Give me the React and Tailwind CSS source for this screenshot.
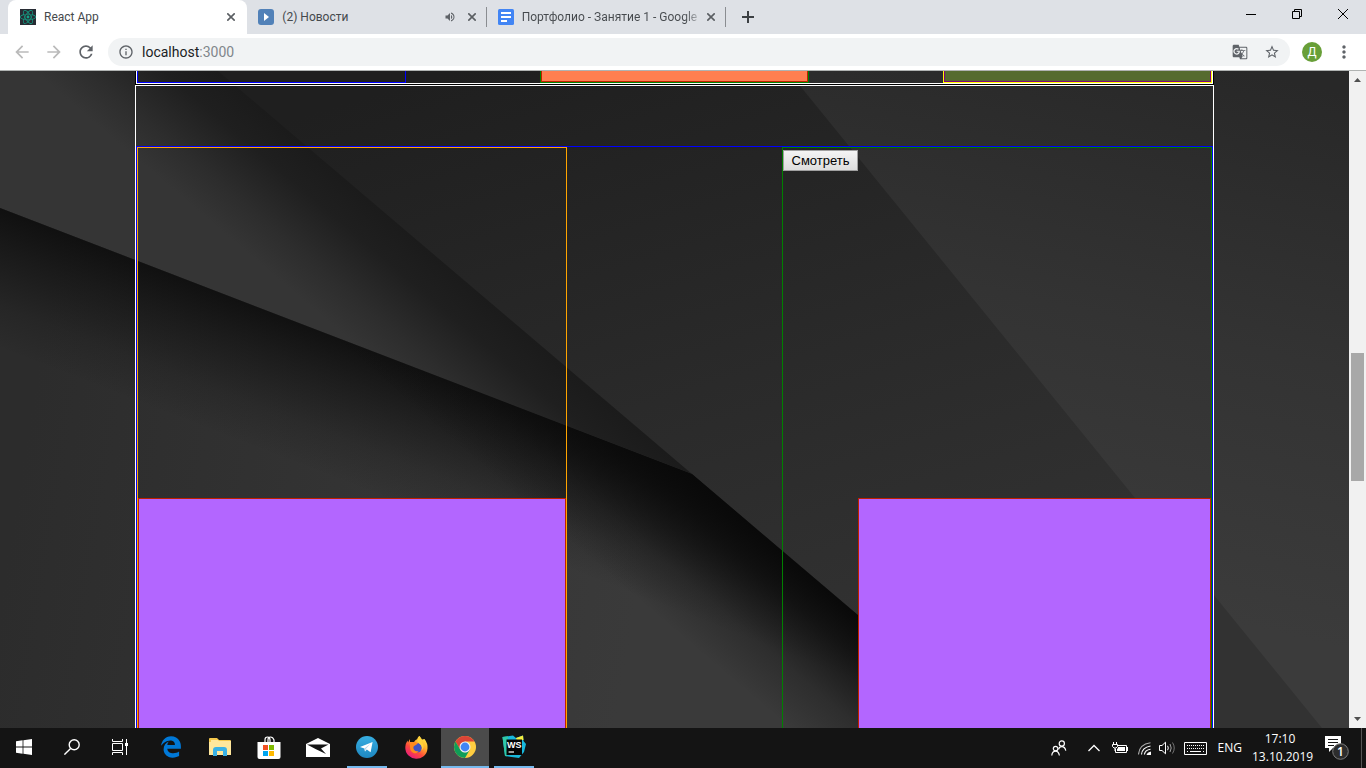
import React from "react";
import { FaEdgeLegacy, FaReact } from "react-icons/fa";
import {
  MdArrowBack,
  MdArrowForward,
  MdGTranslate,
  MdInfoOutline,
  MdMoreVert,
  MdRefresh,
  MdStarBorder,
  MdVolumeUp,
} from "react-icons/md";

function Backdrop() {
  return (
    <svg
      aria-hidden="true"
      className="absolute inset-0 h-full w-full"
      viewBox="0 71 1349 657"
      preserveAspectRatio="none"
    >
      <defs>
        <linearGradient id="mid" gradientUnits="userSpaceOnUse" x1="450" y1="71" x2="650" y2="728">
          <stop offset="0" stopColor="#1f1f1f" />
          <stop offset="0.55" stopColor="#2a2a2a" />
          <stop offset="1" stopColor="#323232" />
        </linearGradient>
        <linearGradient id="right" gradientUnits="userSpaceOnUse" x1="1250" y1="71" x2="1130" y2="600">
          <stop offset="0" stopColor="#282828" />
          <stop offset="0.5" stopColor="#333333" />
          <stop offset="1" stopColor="#3b3b3b" />
        </linearGradient>
        <linearGradient id="strip" gradientUnits="userSpaceOnUse" x1="566" y1="367" x2="475" y2="474">
          <stop offset="0" stopColor="#1b1b1b" />
          <stop offset="0.25" stopColor="#1f1f1f" />
          <stop offset="0.6" stopColor="#2d2d2d" />
          <stop offset="0.85" stopColor="#353535" />
          <stop offset="1" stopColor="#353535" />
        </linearGradient>
        <linearGradient id="low" gradientUnits="userSpaceOnUse" x1="0" y1="600" x2="620" y2="700">
          <stop offset="0" stopColor="#2c2c2c" />
          <stop offset="1" stopColor="#3a3a3a" />
        </linearGradient>
        <linearGradient id="shadeB" gradientUnits="userSpaceOnUse" x1="300" y1="323" x2="252" y2="447">
          <stop offset="0" stopColor="#0b0b0b" stopOpacity="0.85" />
          <stop offset="0.3" stopColor="#0b0b0b" stopOpacity="0.55" />
          <stop offset="0.7" stopColor="#0b0b0b" stopOpacity="0.18" />
          <stop offset="1" stopColor="#0b0b0b" stopOpacity="0" />
        </linearGradient>
        <linearGradient id="shadeA" gradientUnits="userSpaceOnUse" x1="775" y1="544" x2="690" y2="644">
          <stop offset="0" stopColor="#090909" stopOpacity="1" />
          <stop offset="0.25" stopColor="#090909" stopOpacity="0.75" />
          <stop offset="0.65" stopColor="#090909" stopOpacity="0.25" />
          <stop offset="1" stopColor="#090909" stopOpacity="0" />
        </linearGradient>
      </defs>
      <rect x="0" y="71" width="1349" height="657" fill="url(#mid)" />
      <path d="M788 71H1349V728H1322Z" fill="url(#right)" />
      <path d="M0 71H218L692 474L0 208Z" fill="url(#strip)" />
      <path d="M0 208L692 474L991 728H0Z" fill="url(#low)" />
      <path d="M0 208L692 474L991 728H0Z" fill="url(#shadeB)" />
      <path d="M0 208L692 474L991 728H0Z" fill="url(#shadeA)" />
    </svg>
  );
}

function Tab({ active, icon, title, sound, divider }) {
  return (
    <div
      className={
        active
          ? "flex h-full w-1/3 items-center rounded-t-lg bg-white pr-2 pl-3"
          : "flex h-full w-1/3 items-center pl-[11px]"
      }
    >
      {icon}
      <span
        className={
          divider && !sound
            ? "ml-2 min-w-0 flex-1 bg-linear-to-r from-[#45494d] from-90% to-transparent bg-clip-text text-xs whitespace-nowrap text-transparent"
            : "ml-2 min-w-0 flex-1 truncate text-xs text-[#45494d]"
        }
      >
        {title}
      </span>
      {sound && <MdVolumeUp className="mr-2 size-3 text-[#5f6368]" />}
      <button aria-label={"Закрыть " + title} className="flex size-4 items-center justify-center">
        <svg className="size-2" viewBox="0 0 8 8" stroke="#5a5e62" strokeWidth="1.6">
          <path d="M0.3 0.3L7.7 7.7M7.7 0.3L0.3 7.7" />
        </svg>
      </button>
      {divider && <span className="ml-1.5 h-5 w-px bg-[#8a8d91]" />}
    </div>
  );
}

function TabStrip() {
  return (
    <div className="flex h-[34px] bg-[#dee1e6]">
      <div className="flex w-[726px] min-w-0 pl-2">
        <Tab
          active
          title="React App"
          icon={
            <span className="flex size-4 shrink-0 items-center justify-center bg-[#282c34]">
              <FaReact className="size-4 text-[#12a588]" />
            </span>
          }
        />
        <Tab
          title="(2) Новости"
          sound
          divider
          icon={
            <svg className="size-4 shrink-0" viewBox="0 0 16 16">
              <rect width="16" height="16" rx="3" fill="#5181b8" />
              <path d="M6 4L11 8L6 12Z" fill="#fff" />
            </svg>
          }
        />
        <Tab
          title="Портфолио - Занятие 1 - Google"
          divider
          icon={
            <svg className="size-4 shrink-0" viewBox="0 0 16 16">
              <rect width="16" height="16" rx="1.5" fill="#4285f4" />
              <path d="M3 4H13M3 8H13M3 12H9" stroke="#fff" strokeWidth="2" />
            </svg>
          }
        />
      </div>
      <button aria-label="Новая вкладка" className="ml-3 flex w-5 items-center justify-center">
        <svg className="size-3" viewBox="0 0 12 12" stroke="#3c4043" strokeWidth="2">
          <path d="M6 0V12M0 6H12" />
        </svg>
      </button>
      <div className="ml-auto flex h-7">
        <button aria-label="Свернуть" className="flex w-[46px] items-center justify-center">
          <svg className="size-2.5" viewBox="0 0 10 10">
            <path d="M0 5.5H10" stroke="#000" />
          </svg>
        </button>
        <button aria-label="Развернуть" className="flex w-[46px] items-center justify-center">
          <svg className="size-2.5" viewBox="0 0 10 10" fill="none" stroke="#000">
            <path d="M0.5 2.5H7.5V9.5H0.5ZM2.5 2.5V0.5H9.5V7.5H7.5" />
          </svg>
        </button>
        <button aria-label="Закрыть" className="flex w-[46px] items-center justify-center">
          <svg className="size-2.5" viewBox="0 0 10 10" stroke="#000">
            <path d="M0 0L10 10M10 0L0 10" />
          </svg>
        </button>
      </div>
    </div>
  );
}

function Toolbar() {
  return (
    <div className="flex h-[37px] items-center border-b border-[#b0b3b2] bg-white px-3 py-1">
      <button aria-label="Назад" className="flex w-5 justify-center text-[#bababa]">
        <MdArrowBack className="size-5" />
      </button>
      <button aria-label="Вперёд" className="ml-3 flex w-5 justify-center text-[#bababa]">
        <MdArrowForward className="size-5" />
      </button>
      <button aria-label="Обновить" className="ml-3 flex w-5 justify-center text-[#5f6368]">
        <MdRefresh className="size-5" />
      </button>
      <div className="ml-3 flex h-7 flex-1 items-center rounded-full bg-[#f1f3f4] px-2.5">
        <MdInfoOutline className="size-4 text-[#5f6368]" />
        <a href="#top" className="ml-2 flex-1 text-sm text-[#202124]">
          localhost<span className="text-[#80868b]">:3000</span>
        </a>
        <button aria-label="Перевести страницу" className="mr-4 text-[#5f6368]">
          <MdGTranslate className="size-4" />
        </button>
        <button aria-label="Добавить в закладки" className="text-[#5f6368]">
          <MdStarBorder className="size-4" />
        </button>
      </div>
      <button
        aria-label="Профиль"
        className="ml-3 flex size-5 items-center justify-center rounded-full bg-[#689f38] text-xs text-white"
      >
        Д
      </button>
      <button aria-label="Меню" className="ml-3 flex w-5 justify-center text-[#5f6368]">
        <MdMoreVert className="size-5" />
      </button>
    </div>
  );
}

function Page() {
  return (
    <main className="relative min-w-0 flex-1 overflow-hidden bg-[#2a2a2a]">
      <Backdrop />
      <div className="relative mx-auto flex h-full w-4/5 flex-col">
        <div className="h-3.5 shrink-0 border-x border-b border-black">
          <div className="flex h-full justify-between border-x border-b border-white">
            <div className="w-1/4 border-x border-b border-[#0000ff]" />
            <div className="w-1/4 border-x border-b border-[#008000]">
              <div className="h-full border-x border-b border-[#c02000] bg-[#ff7f50]" />
            </div>
            <div className="w-1/4 border-x border-b border-[#ffff00]">
              <div className="h-full border-x border-b border-[#800080] bg-[#556b2f]" />
            </div>
          </div>
        </div>
        <div className="flex flex-1 flex-col border-x border-t border-white pt-[60px]">
          <div className="flex flex-1 justify-between border-x border-t border-[#0000ff]">
            <div className="flex w-2/5 border-x border-t border-[#ffa500] pt-[350px]">
              <div className="flex-1 border-x border-t border-[#c02000] bg-[#b366ff]" />
            </div>
            <div className="flex w-2/5 items-start border-x border-t border-[#008000]">
              <button className="mt-0.5 h-[21px] w-[75px] border border-[#a0a0a0] bg-linear-to-b from-[#f4f4f4] to-[#dddddd] text-center font-['Liberation_Sans',sans-serif] text-[13px] leading-4 text-black">
                Смотреть
              </button>
              <div className="flex flex-1 self-stretch pt-[350px]">
                <div className="flex-1 border-x border-t border-[#c02000] bg-[#b366ff]" />
              </div>
            </div>
          </div>
        </div>
      </div>
    </main>
  );
}

function Scrollbar() {
  return (
    <div className="flex w-[17px] flex-col items-center bg-[#f1f1f1]">
      <svg className="h-[17px] w-[17px]" viewBox="0 0 17 17">
        <path d="M5 11L8.5 7L12 11Z" fill="#505050" />
      </svg>
      <div className="flex w-full flex-1 flex-col items-center">
        <div className="grow-265" />
        <div className="h-32 w-[13px] bg-[#a8a8a8]" />
        <div className="grow-230" />
      </div>
      <svg className="h-[17px] w-[17px]" viewBox="0 0 17 17">
        <path d="M5 6L8.5 10L12 6Z" fill="#505050" />
      </svg>
    </div>
  );
}

function TaskButton({ label, active, running, children }) {
  return (
    <button
      aria-label={label}
      className={
        active
          ? "flex h-full w-12 flex-col items-center bg-[#4b4b4b]"
          : "flex h-full w-12 flex-col items-center"
      }
    >
      <span className="flex flex-1 items-center justify-center">{children}</span>
      {running && <span className={active ? "h-0.5 w-12 bg-[#76b9ed]" : "h-0.5 w-10 bg-[#76b9ed]"} />}
      {!running && <span className="h-0.5" />}
    </button>
  );
}

function StartIcon() {
  return (
    <svg className="size-4" viewBox="0 0 16 16" fill="#fff">
      <path d="M0 2.2L6.6 1.3V7.6H0ZM7.4 1.2L16 0V7.6H7.4ZM0 8.4H6.6V14.7L0 13.8ZM7.4 8.4H16V16L7.4 14.8Z" />
    </svg>
  );
}

function SearchIcon() {
  return (
    <svg className="size-4" viewBox="0 0 16 16" fill="none" stroke="#fff" strokeWidth="1.4">
      <circle cx="10.2" cy="5.8" r="5" />
      <path d="M6.6 9.4L0.4 15.6" />
    </svg>
  );
}

function TaskViewIcon() {
  return (
    <svg className="size-4" viewBox="0 0 16 16" fill="none" stroke="#fff">
      <path d="M0.5 0V2.5H10.5V0M0.5 16V13.5H10.5V16M0.5 4.5H10.5V11.5H0.5ZM14.5 0V16" />
      <path d="M13 4H16V7H13Z" fill="#fff" stroke="none" />
    </svg>
  );
}

function FolderIcon() {
  return (
    <svg className="h-[18px] w-[22px]" viewBox="0 0 22 18">
      <path d="M0 1Q0 0 1 0H8L10 2H21Q22 2 22 3V17H0Z" fill="#f5c84c" />
      <path d="M2 2H9L10 3H22V17H0V4H2Z" fill="#ffe79c" />
      <path d="M4 18V12Q4 9 7 9H15Q18 9 18 12V18H14V13H8V18Z" fill="#39b1e6" />
    </svg>
  );
}

function StoreIcon() {
  return (
    <svg className="h-[23px] w-6" viewBox="0 0 24 23">
      <path d="M8 7V4Q8 1 10.5 1T13 4V7M11 6V4Q11 1 13.5 1T17 4V7" fill="none" stroke="#fff" strokeWidth="1.2" />
      <path d="M0.5 6H23.5V21Q23.5 23 21.5 23H2.5Q0.5 23 0.5 21Z" fill="#fff" />
      <path d="M6 9H11V14H6Z" fill="#f25022" />
      <path d="M12 9H17V14H12Z" fill="#7fba00" />
      <path d="M6 15H11V20H6Z" fill="#00a4ef" />
      <path d="M12 15H17V20H12Z" fill="#ffb900" />
    </svg>
  );
}

function MailIcon() {
  return (
    <svg className="h-[19px] w-6" viewBox="0 0 24 19">
      <path d="M0 6L12 0L24 6V19H0Z" fill="#fff" />
      <path d="M1 6.5H22.5L15 10.5L20 16L10 11.2Z" fill="#151515" />
    </svg>
  );
}

function TelegramIcon() {
  return (
    <svg className="size-[22px]" viewBox="0 0 22 22">
      <defs>
        <linearGradient id="tg" x1="0" y1="0" x2="0" y2="1">
          <stop offset="0" stopColor="#37aee2" />
          <stop offset="1" stopColor="#1e87c0" />
        </linearGradient>
      </defs>
      <circle cx="11" cy="11" r="11" fill="url(#tg)" />
      <path d="M4 11L16.6 6L14.6 16.2L10.8 13.6L9 15.4L8.4 12.6Z" fill="#fff" />
      <path d="M8.4 12.6L14.4 7.8L9.8 13L9 15.4Z" fill="#b6d5ea" />
    </svg>
  );
}

function FirefoxIcon() {
  return (
    <svg className="size-[23px]" viewBox="0 0 23 23">
      <defs>
        <linearGradient id="fx" x1="0.9" y1="0" x2="0.2" y2="1">
          <stop offset="0" stopColor="#fff44f" />
          <stop offset="0.35" stopColor="#ffb52b" />
          <stop offset="0.65" stopColor="#ff4b3a" />
          <stop offset="1" stopColor="#e31587" />
        </linearGradient>
      </defs>
      <path
        d="M14.5 0Q16 1.5 17 3.5L19.5 3Q23 7.5 22.5 12.5Q22 18 18.3 20.6Q15 23 11 22.8Q6.5 22.6 3.5 19.6Q0 16 0.3 11Q0.5 7.5 2.5 4.5L3 6.5L5 3V6H9Q10.5 3.5 12.5 3Q12.5 1 14.5 0Z"
        fill="url(#fx)"
      />
      <circle cx="12" cy="11.8" r="4.8" fill="#3f55c4" />
      <path d="M5 7Q9 5 13 7.4L10 9.5Q7.8 10 8.6 13Q10 16 13.6 15Q12 18.3 8.5 17Q5 15.5 5 11Z" fill="#ff8a1c" />
      <path d="M12.5 3Q12 6 15 8Q18 11 16.4 14.5Q19.5 12 18 8Q17 5 14.5 0Q12.6 1 12.5 3Z" fill="#ffd23c" />
    </svg>
  );
}

function ChromeIcon() {
  return (
    <svg className="size-[22px]" viewBox="0 0 22 22">
      <circle cx="11" cy="11" r="11" fill="#ffcd40" />
      <path d="M1.5 5.5A11 11 0 0 1 20.5 5.5H11L6.2 13.7Z" fill="#db4437" />
      <path d="M1.5 5.5L6.3 13.7L11 16.5L15.8 13.7L11 22A11 11 0 0 1 1.5 5.5Z" fill="#0f9d58" />
      <circle cx="11" cy="11" r="5.5" fill="#f1f1f1" />
      <circle cx="11" cy="11" r="4.4" fill="#4285f4" />
    </svg>
  );
}

function WebStormIcon() {
  return (
    <svg className="size-6" viewBox="0 0 24 24">
      <path d="M0.5 2L11 0.5L14 3L21 0.5L21.5 6L24 9L22 17L17 23L3 21Z" fill="#18b8dc" />
      <path d="M14 3L21 0.5L21.5 5L15 5.5Z" fill="#f7ee3e" />
      <path d="M0.5 2L6 1.3L5 21.3L3 21Z" fill="#2fc8a6" />
      <path d="M4.5 4.5H20V20H4.5Z" fill="#050505" />
      <text x="5" y="13" fill="#fff" fontFamily="Liberation Sans" fontWeight="700" fontSize="9">
        WS
      </text>
      <path d="M6.5 17H12" stroke="#fff" strokeWidth="1.2" />
    </svg>
  );
}

function Tray() {
  return (
    <div className="ml-auto flex h-full items-center text-xs text-white">
      <button aria-label="Люди" className="mr-[21px]">
        <svg className="size-4" viewBox="0 0 16 16" fill="none" stroke="#fff" strokeWidth="1.2">
          <circle cx="10.8" cy="3.5" r="2.6" />
          <path d="M7.6 9.4Q8.2 6.6 10.8 6.6Q14 6.6 14.8 10.6" />
          <circle cx="4.6" cy="8.6" r="2.3" />
          <path d="M0.8 15.5Q1.2 11.2 4.6 11.2Q7.6 11.2 8.4 15.5" />
        </svg>
      </button>
      <button aria-label="Скрытые значки" className="mr-3">
        <svg className="h-2 w-3" viewBox="0 0 12 8" fill="none" stroke="#fff" strokeWidth="1.3">
          <path d="M0.5 7L6 1.5L11.5 7" />
        </svg>
      </button>
      <svg className="mr-2.5 h-3 w-4" viewBox="0 0 16 12" fill="none" stroke="#fff">
        <path d="M5.5 3.5H14.5V10.5H3.5V7" />
        <path d="M6 5H13V9H5V7L6 6Z" fill="#fff" stroke="none" />
        <path d="M15.5 5V9M1.5 0V2.5M4.5 0V2.5M0.5 2.5H5.5V4.5L4 6H2L0.5 4.5ZM3 6V9" />
      </svg>
      <svg className="mr-2 size-[13px]" viewBox="0 0 13 13" fill="none" stroke="#fff" strokeWidth="1.1">
        <path d="M0.5 12.5Q1 2.5 12.5 0.8" opacity="0.65" />
        <path d="M3.5 12.5Q4 5.5 12.5 4" />
        <path d="M6.4 12.5Q7 8 12.5 7.2" />
        <path d="M9.3 12.5Q9.8 10.6 12.5 10.2V12.5Z" fill="#fff" />
      </svg>
      <svg className="mr-2 h-3.5 w-[17px]" viewBox="0 0 17 14" fill="none" stroke="#fff">
        <path d="M0.5 4.5H3L6.5 1.2V12.8L3 9.5H0.5Z" />
        <path d="M8.6 4.8Q10 7 8.6 9.2" />
        <path d="M11 3Q13.4 7 11 11" opacity="0.6" />
        <path d="M13.5 1.5Q17 7 13.5 12.5" opacity="0.4" />
      </svg>
      <svg className="mr-[11px] h-[13px] w-[23px]" viewBox="0 0 23 13" fill="none" stroke="#fff">
        <path d="M0.5 0.5H22.5V12.5H0.5Z" />
        <path d="M3 3.5H20M3 6.5H20" strokeDasharray="1 1" />
        <path d="M3 9.5H4M6 9.5H17M19 9.5H20" />
      </svg>
      <button className="mr-2.5">ENG</button>
      <button className="mr-[17px] w-14 text-center leading-[18px] whitespace-nowrap">
        <span className="block">17:10</span>
        <span className="block">13.10.2019</span>
      </button>
      <button aria-label="Уведомления" className="relative mr-3 h-6 w-6">
        <svg className="size-6" viewBox="0 0 24 24">
          <path d="M0 0H16V12H8L4 16V12H0Z" fill="#fff" />
          <path d="M3 3.5H13M3 6.5H13M3 9.5H9" stroke="#151515" />
          <circle cx="15.5" cy="15.5" r="7.8" fill="#2d2d2d" stroke="#7d7d7d" />
        </svg>
        <span className="absolute right-0 bottom-0 w-[17px] text-center text-xs leading-[17px] font-semibold">1</span>
      </button>
      <span className="mr-1 h-10 w-px bg-[#555555]" />
    </div>
  );
}

function Taskbar() {
  return (
    <footer className="flex h-10 items-center bg-[#141414] font-['Open_Sans','Noto_Sans',sans-serif]">
      <TaskButton label="Пуск">
        <StartIcon />
      </TaskButton>
      <TaskButton label="Поиск">
        <SearchIcon />
      </TaskButton>
      <TaskButton label="Представление задач">
        <TaskViewIcon />
      </TaskButton>
      <div className="ml-[3px] flex h-full gap-px">
        <TaskButton label="Edge">
          <FaEdgeLegacy className="size-[22px] text-[#0078d7]" />
        </TaskButton>
        <TaskButton label="Проводник">
          <FolderIcon />
        </TaskButton>
        <TaskButton label="Магазин">
          <StoreIcon />
        </TaskButton>
        <TaskButton label="Почта">
          <MailIcon />
        </TaskButton>
        <TaskButton label="Telegram" running>
          <TelegramIcon />
        </TaskButton>
        <TaskButton label="Firefox">
          <FirefoxIcon />
        </TaskButton>
        <TaskButton label="Chrome" running active>
          <ChromeIcon />
        </TaskButton>
        <TaskButton label="WebStorm" running>
          <WebStormIcon />
        </TaskButton>
      </div>
      <Tray />
    </footer>
  );
}

export default function App() {
  return (
    <div id="top" className="flex h-screen flex-col overflow-hidden font-[Roboto,'Noto_Sans',sans-serif]">
      <header>
        <TabStrip />
        <Toolbar />
      </header>
      <div className="flex min-h-0 flex-1">
        <Page />
        <Scrollbar />
      </div>
      <Taskbar />
    </div>
  );
}
